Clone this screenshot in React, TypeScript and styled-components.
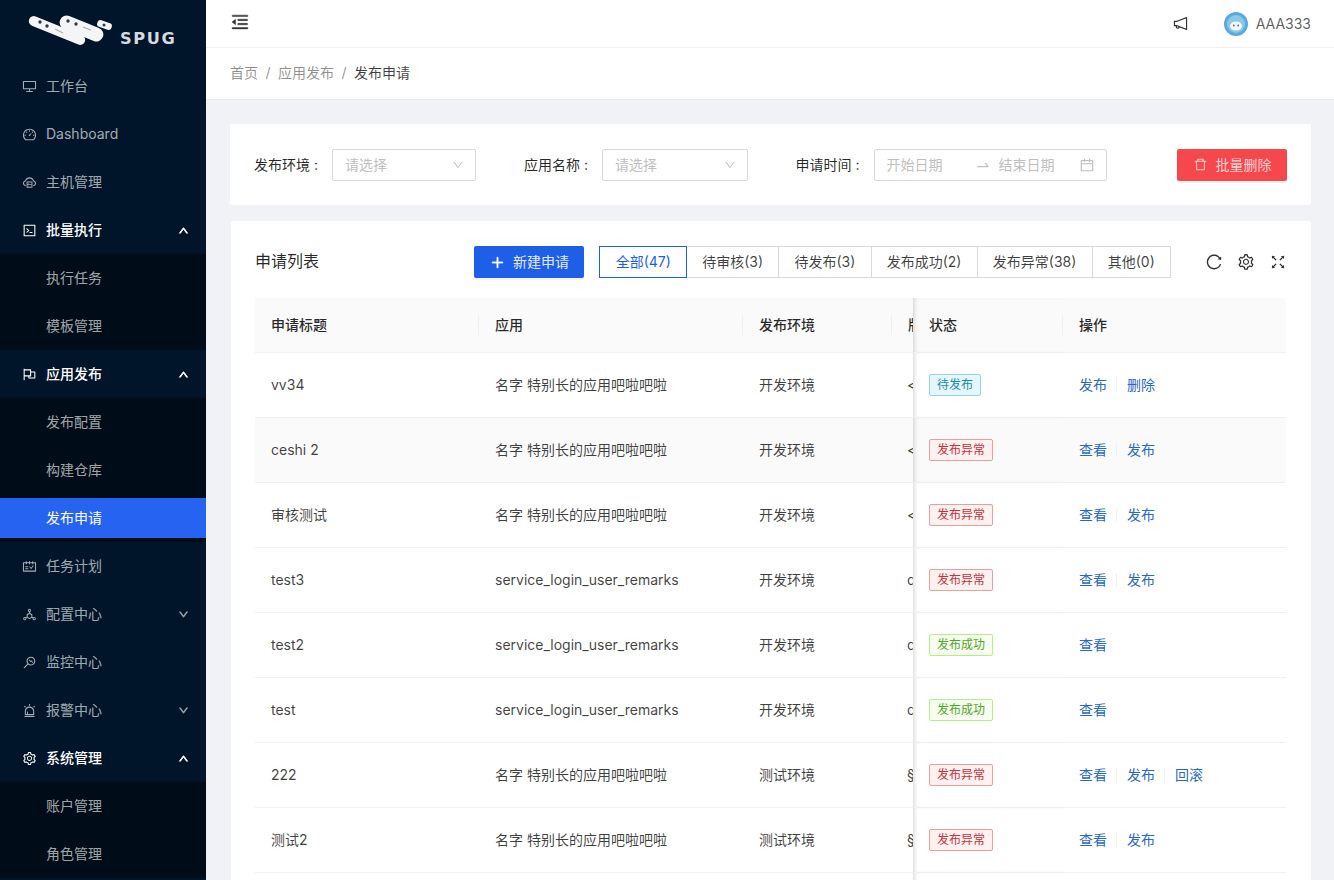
import React from "react";
import styled, { createGlobalStyle } from "styled-components";
import {
  AiOutlineAlert,
  AiOutlineCalendar,
  AiOutlineCloudServer,
  AiOutlineCode,
  AiOutlineDashboard,
  AiOutlineDelete,
  AiOutlineDeploymentUnit,
  AiOutlineDesktop,
  AiOutlineDown,
  AiOutlineFlag,
  AiOutlineFullscreen,
  AiOutlineMenuFold,
  AiOutlineMonitor,
  AiOutlinePlus,
  AiOutlineNotification,
  AiOutlineReload,
  AiOutlineSchedule,
  AiOutlineSetting,
  AiOutlineSwapRight,
  AiOutlineUp,
} from "react-icons/ai";

const GlobalStyle = createGlobalStyle`
  html, body {
    margin: 0;
    height: 100%;
    overflow: hidden;
  }
  body {
    font-family: Inter, "Noto Sans CJK SC", "Liberation Sans", sans-serif;
    font-size: 14px;
    line-height: 22px;
    color: rgba(0, 0, 0, 0.85);
  }
  * {
    box-sizing: border-box;
  }
`;

const Layout = styled.div`
  display: flex;
  width: 1334px;
  height: 880px;
  overflow: hidden;
  background: #f0f2f5;
`;

/* sidebar */

const Sider = styled.aside`
  flex: 0 0 206px;
  height: 880px;
  overflow: hidden;
  background: #001529;
  color: rgba(255, 255, 255, 0.65);
`;

const LogoBox = styled.div`
  position: relative;
  height: 62px;
  padding: 14px 0 0 27px;
`;

const LogoText = styled.span`
  position: absolute;
  left: 120px;
  top: 28px;
  font-family: "DejaVu Sans", sans-serif;
  font-size: 15px;
  font-weight: 700;
  letter-spacing: 1.5px;
  color: #d5dade;
  transform: scaleX(1.08);
  transform-origin: left;
`;

const MenuItem = styled.div<{ $open?: boolean; $active?: boolean; $sub?: boolean }>`
  display: flex;
  align-items: center;
  height: ${(p) => (p.$active ? "40px" : "48px")};
  margin: ${(p) => (p.$active ? "4px 0" : "0")};
  padding: ${(p) => (p.$sub ? "0 17px 0 46px" : "0 17px 0 22px")};
  color: ${(p) => (p.$open || p.$active ? "#fff" : "rgba(255, 255, 255, 0.65)")};
  background: ${(p) => (p.$active ? "#2563f0" : "transparent")};
  font-weight: ${(p) => (p.$open ? 500 : 400)};

  svg.menu-icon {
    font-size: 15px;
    margin-right: 9px;
  }
`;

const Arrow = styled.span<{ $open?: boolean }>`
  margin-left: auto;
  display: flex;
  font-size: 11px;
  color: ${(p) => (p.$open ? "#fff" : "rgba(255, 255, 255, 0.45)")};
  svg path {
    stroke: currentColor;
    stroke-width: 80;
  }
`;

const SubMenu = styled.div`
  display: flow-root;
  background: #000c17;
`;

/* header */

const Main = styled.main`
  flex: 1;
  min-width: 0;
`;

const Header = styled.header`
  display: flex;
  align-items: center;
  height: 48px;
  padding: 0 23px 0 24px;
  background: #fff;
  border-bottom: 1px solid #f0f0f0;
`;

const Trigger = styled.span`
  display: flex;
  font-size: 20px;
  color: #333;
  margin-right: auto;
  margin-top: -4px;
  svg path {
    stroke: currentColor;
    stroke-width: 24;
  }
`;

const Notice = styled.span`
  display: flex;
  font-size: 17px;
  color: #333;
  margin-right: 35px;
`;

const UserName = styled.span`
  margin-left: 8px;
  color: rgba(0, 0, 0, 0.65);
`;

const Breadcrumb = styled.nav`
  display: flex;
  align-items: center;
  height: 52px;
  padding: 0 24px 2px;
  background: #fff;
  color: rgba(0, 0, 0, 0.45);
  border-bottom: 1px solid #ececec;
`;

const Slash = styled.span`
  margin: 0 7.5px;
`;

const Current = styled.span`
  color: rgba(0, 0, 0, 0.75);
`;

/* page */

const Content = styled.div`
  padding: 24px 23px 0 24px;
`;

const FilterCard = styled.section`
  display: flex;
  align-items: center;
  height: 81px;
  padding: 0 24px;
  background: #fff;
  border-radius: 2px;
`;

const FieldLabel = styled.label`
  flex: 0 0 78px;
  white-space: nowrap;
`;

const Field = styled.div<{ $width: number }>`
  display: flex;
  align-items: center;
  flex: 0 0 ${(p) => p.$width}px;
  margin-right: 48px;
`;

const SelectBox = styled.div`
  flex: 1;
  display: flex;
  align-items: center;
  justify-content: space-between;
  height: 32px;
  padding: 0 11px 0 12px;
  background: #fff;
  border: 1px solid #d9d9d9;
  border-radius: 2px;
  color: #bfbfbf;

  svg {
    font-size: 12px;
  }
`;

const RangeArrow = styled.span`
  display: flex;
  margin: 0 8px 0 32px;
  font-size: 16px;
  svg {
    font-size: 16px;
  }
`;

const RangeText = styled.span`
  white-space: nowrap;
`;

const RangeEnd = styled.span`
  display: flex;
  margin-left: auto;
  svg {
    font-size: 16px;
  }
`;

const Button = styled.button<{ $tone: "primary" | "danger" }>`
  display: inline-flex;
  align-items: center;
  justify-content: center;
  gap: 8px;
  height: 32px;
  padding: 0;
  border: 0;
  border-radius: 2px;
  font: inherit;
  color: ${(p) => (p.$tone === "danger" ? "rgba(255, 255, 255, 0.75)" : "rgba(255, 255, 255, 0.9)")};
  background: ${(p) => (p.$tone === "danger" ? "#f5474c" : "#1f5fe8")};
  box-shadow: 0 2px 0 rgba(0, 0, 0, 0.045);

  svg {
    font-size: 15px;
  }
`;

const DangerButton = styled(Button)`
  width: 110px;
  margin-left: auto;
`;

const PrimaryButton = styled(Button)`
  width: 110px;
  margin-right: 16px;

  svg {
    color: #fff;
  }
  svg path {
    stroke: currentColor;
    stroke-width: 50;
  }
`;

const ListCard = styled.section`
  margin: 16px 0 0 1px;
  padding: 25px 24px 0 25px;
  background: #fff;
  border-radius: 2px;
`;

const Toolbar = styled.div`
  display: flex;
  align-items: center;
  height: 32px;
  margin-bottom: 20px;
`;

const CardTitle = styled.h2`
  margin: 0 auto 2px -1px;
  font-size: 16px;
  font-weight: 400;
`;

const Radios = styled.div`
  display: flex;
  margin-right: 34px;
`;

const Radio = styled.span<{ $checked?: boolean }>`
  height: 32px;
  line-height: 30px;
  padding: 0 15.2px;
  margin-left: -1px;
  border: 1px solid ${(p) => (p.$checked ? "#1f5fe8" : "#d9d9d9")};
  color: ${(p) => (p.$checked ? "#1f5fe8" : "rgba(0, 0, 0, 0.75)")};
  background: #fff;
  position: relative;
  z-index: ${(p) => (p.$checked ? 1 : 0)};
  white-space: nowrap;
`;

const ToolIcons = styled.div`
  display: flex;
  align-items: center;
  gap: 14px;
  font-size: 18px;
  color: rgba(0, 0, 0, 0.8);

  svg {
    display: block;
  }
`;

/* table */

const Table = styled.table`
  width: 1031px;
  margin-left: -1px;
  table-layout: fixed;
  border-collapse: collapse;
`;

const Th = styled.th<{ $divider?: boolean; $fixedStart?: boolean }>`
  position: relative;
  height: 54px;
  padding: 0 16px;
  background: #fafafa;
  border-bottom: 1px solid #f0f0f0;
  font-weight: 500;
  text-align: left;
  white-space: nowrap;
  overflow: hidden;
  box-shadow: ${(p) => (p.$fixedStart ? "inset 4px 0 5px -3px rgba(0, 0, 0, 0.18)" : "none")};

  &::after {
    content: "";
    display: ${(p) => (p.$divider ? "block" : "none")};
    position: absolute;
    right: 0;
    top: 17px;
    width: 1px;
    height: 20px;
    background: #efefef;
  }
`;

const Tr = styled.tr<{ $hover?: boolean }>`
  background: ${(p) => (p.$hover ? "#fafafa" : "#fff")};
`;

const Td = styled.td<{ $fixedStart?: boolean }>`
  height: 65px;
  padding: 0 16px;
  border-bottom: 1px solid #f0f0f0;
  white-space: nowrap;
  overflow: hidden;
  color: rgba(0, 0, 0, 0.75);
  box-shadow: ${(p) => (p.$fixedStart ? "inset 4px 0 5px -3px rgba(0, 0, 0, 0.18)" : "none")};
`;

const VersionTd = styled(Td)`
  padding: 0 0 0 15px;
`;

const tagTones = {
  cyan: { color: "#1b8aa8", bg: "#e6f7fc", border: "#91d5e8" },
  red: { color: "#c4323c", bg: "#fff1f0", border: "#e8a09b" },
  green: { color: "#52a32d", bg: "#f6ffed", border: "#b7eb8f" },
};

const Tag = styled.span<{ $tone: keyof typeof tagTones }>`
  display: inline-block;
  height: 22px;
  line-height: 20px;
  padding: 0 7px;
  font-size: 12px;
  border-radius: 2px;
  vertical-align: middle;
  color: ${(p) => tagTones[p.$tone].color};
  background: ${(p) => tagTones[p.$tone].bg};
  border: 1px solid ${(p) => tagTones[p.$tone].border};
`;

const Action = styled.a`
  color: #2a69c0;
  cursor: pointer;

  & + &::before {
    content: "";
    display: inline-block;
    width: 1px;
    height: 14px;
    margin: 0 10px 0 9px;
    vertical-align: -2px;
    background: #f0f0f0;
  }
`;

/* little drawings */

const LogoMark = () => (
  <svg width="86" height="34" viewBox="0 0 86 34">
    <g fill="#f4f5f6">
      <rect x="0" y="11.5" width="60" height="10" rx="5" transform="rotate(22 30 16.5)" />
      <rect x="31.5" y="7.5" width="46" height="14" rx="7" transform="rotate(22 54.5 14.5)" />
      <rect x="70" y="7.5" width="15" height="7" rx="3" transform="rotate(20 77.5 11)" />
    </g>
    <g fill="#2b3a4a">
      <circle cx="13" cy="8" r="1.7" />
      <circle cx="20" cy="12" r="1.7" />
      <circle cx="41" cy="7" r="1.7" />
      <circle cx="49" cy="10" r="1.7" />
      <circle cx="77" cy="11" r="1.5" />
    </g>
    <g stroke="#a9aeb3" strokeWidth="1.2">
      <line x1="28" y1="15" x2="36" y2="19" />
      <line x1="56" y1="13" x2="64" y2="16" />
    </g>
  </svg>
);

const Avatar = () => (
  <svg width="24" height="24" viewBox="0 0 24 24">
    <circle cx="12" cy="12" r="12" fill="#5aa9dc" />
    <circle cx="12" cy="12" r="9" fill="#8cc6e8" />
    <ellipse cx="12" cy="14" rx="6" ry="4.5" fill="#f4f8fb" />
    <circle cx="9.8" cy="13.5" r="0.9" fill="#3d6f92" />
    <circle cx="14.2" cy="13.5" r="0.9" fill="#3d6f92" />
  </svg>
);

const renderMenuIcon = (Icon: React.ComponentType<{ className?: string }>) => (
  <Icon className="menu-icon" />
);

type Row = {
  title: string;
  app: string;
  env: string;
  version: string;
  tag: keyof typeof tagTones;
  status: string;
  actions: string[];
};

const longApp = "名字 特别长的应用吧啦吧啦";
const loginApp = "service_login_user_remarks";

const rows: Row[] = [
  { title: "vv34", app: longApp, env: "开发环境", version: "<", tag: "cyan", status: "待发布", actions: ["发布", "删除"] },
  { title: "ceshi 2", app: longApp, env: "开发环境", version: "<", tag: "red", status: "发布异常", actions: ["查看", "发布"] },
  { title: "审核测试", app: longApp, env: "开发环境", version: "<", tag: "red", status: "发布异常", actions: ["查看", "发布"] },
  { title: "test3", app: loginApp, env: "开发环境", version: "d", tag: "red", status: "发布异常", actions: ["查看", "发布"] },
  { title: "test2", app: loginApp, env: "开发环境", version: "d", tag: "green", status: "发布成功", actions: ["查看"] },
  { title: "test", app: loginApp, env: "开发环境", version: "d", tag: "green", status: "发布成功", actions: ["查看"] },
  { title: "222", app: longApp, env: "测试环境", version: "§", tag: "red", status: "发布异常", actions: ["查看", "发布", "回滚"] },
  { title: "测试2", app: longApp, env: "测试环境", version: "§", tag: "red", status: "发布异常", actions: ["查看", "发布"] },
  { title: "测试1", app: longApp, env: "测试环境", version: "§", tag: "green", status: "发布成功", actions: ["查看"] },
];

const App = () => {
  return (
    <Layout>
      <GlobalStyle />
      <Sider>
        <LogoBox>
          <LogoMark />
          <LogoText>SPUG</LogoText>
        </LogoBox>
        <MenuItem>{renderMenuIcon(AiOutlineDesktop)}工作台</MenuItem>
        <MenuItem>{renderMenuIcon(AiOutlineDashboard)}Dashboard</MenuItem>
        <MenuItem>{renderMenuIcon(AiOutlineCloudServer)}主机管理</MenuItem>
        <MenuItem $open>
          {renderMenuIcon(AiOutlineCode)}批量执行
          <Arrow $open><AiOutlineUp /></Arrow>
        </MenuItem>
        <SubMenu>
          <MenuItem $sub>执行任务</MenuItem>
          <MenuItem $sub>模板管理</MenuItem>
        </SubMenu>
        <MenuItem $open>
          {renderMenuIcon(AiOutlineFlag)}应用发布
          <Arrow $open><AiOutlineUp /></Arrow>
        </MenuItem>
        <SubMenu>
          <MenuItem $sub>发布配置</MenuItem>
          <MenuItem $sub>构建仓库</MenuItem>
          <MenuItem $sub $active>发布申请</MenuItem>
        </SubMenu>
        <MenuItem>{renderMenuIcon(AiOutlineSchedule)}任务计划</MenuItem>
        <MenuItem>
          {renderMenuIcon(AiOutlineDeploymentUnit)}配置中心
          <Arrow><AiOutlineDown /></Arrow>
        </MenuItem>
        <MenuItem>{renderMenuIcon(AiOutlineMonitor)}监控中心</MenuItem>
        <MenuItem>
          {renderMenuIcon(AiOutlineAlert)}报警中心
          <Arrow><AiOutlineDown /></Arrow>
        </MenuItem>
        <MenuItem $open>
          {renderMenuIcon(AiOutlineSetting)}系统管理
          <Arrow $open><AiOutlineUp /></Arrow>
        </MenuItem>
        <SubMenu>
          <MenuItem $sub>账户管理</MenuItem>
          <MenuItem $sub>角色管理</MenuItem>
        </SubMenu>
      </Sider>

      <Main>
        <Header>
          <Trigger><AiOutlineMenuFold /></Trigger>
          <Notice><AiOutlineNotification /></Notice>
          <Avatar />
          <UserName>AAA333</UserName>
        </Header>
        <Breadcrumb>
          首页<Slash>/</Slash>应用发布<Slash>/</Slash><Current>发布申请</Current>
        </Breadcrumb>

        <Content>
          <FilterCard>
            <Field $width={222}>
              <FieldLabel>发布环境 :</FieldLabel>
              <SelectBox>请选择<AiOutlineDown /></SelectBox>
            </Field>
            <Field $width={223.5}>
              <FieldLabel>应用名称 :</FieldLabel>
              <SelectBox>请选择<AiOutlineDown /></SelectBox>
            </Field>
            <Field $width={311}>
              <FieldLabel>申请时间 :</FieldLabel>
              <SelectBox>
                <RangeText>开始日期</RangeText>
                <RangeArrow><AiOutlineSwapRight /></RangeArrow>
                <RangeText>结束日期</RangeText>
                <RangeEnd><AiOutlineCalendar /></RangeEnd>
              </SelectBox>
            </Field>
            <DangerButton $tone="danger"><AiOutlineDelete />批量删除</DangerButton>
          </FilterCard>

          <ListCard>
            <Toolbar>
              <CardTitle>申请列表</CardTitle>
              <PrimaryButton $tone="primary"><AiOutlinePlus />新建申请</PrimaryButton>
              <Radios>
                <Radio $checked>全部(47)</Radio>
                <Radio>待审核(3)</Radio>
                <Radio>待发布(3)</Radio>
                <Radio>发布成功(2)</Radio>
                <Radio>发布异常(38)</Radio>
                <Radio>其他(0)</Radio>
              </Radios>
              <ToolIcons>
                <AiOutlineReload />
                <AiOutlineSetting />
                <AiOutlineFullscreen />
              </ToolIcons>
            </Toolbar>

            <Table>
              <colgroup>
                <col width={224} />
                <col width={264} />
                <col width={149} />
                <col width={21} />
                <col width={150} />
                <col width={223} />
              </colgroup>
              <thead>
                <tr>
                  <Th $divider>申请标题</Th>
                  <Th $divider>应用</Th>
                  <Th $divider>发布环境</Th>
                  <Th>版本</Th>
                  <Th $divider $fixedStart>状态</Th>
                  <Th>操作</Th>
                </tr>
              </thead>
              <tbody>
                {rows.map((row, i) => (
                  <Tr key={row.title} $hover={i === 1}>
                    <Td>{row.title}</Td>
                    <Td>{row.app}</Td>
                    <Td>{row.env}</Td>
                    <VersionTd>{row.version}</VersionTd>
                    <Td $fixedStart><Tag $tone={row.tag}>{row.status}</Tag></Td>
                    <Td>
                      {row.actions.map((a) => (
                        <Action key={a}>{a}</Action>
                      ))}
                    </Td>
                  </Tr>
                ))}
              </tbody>
            </Table>
          </ListCard>
        </Content>
      </Main>
    </Layout>
  );
};

export default App;
